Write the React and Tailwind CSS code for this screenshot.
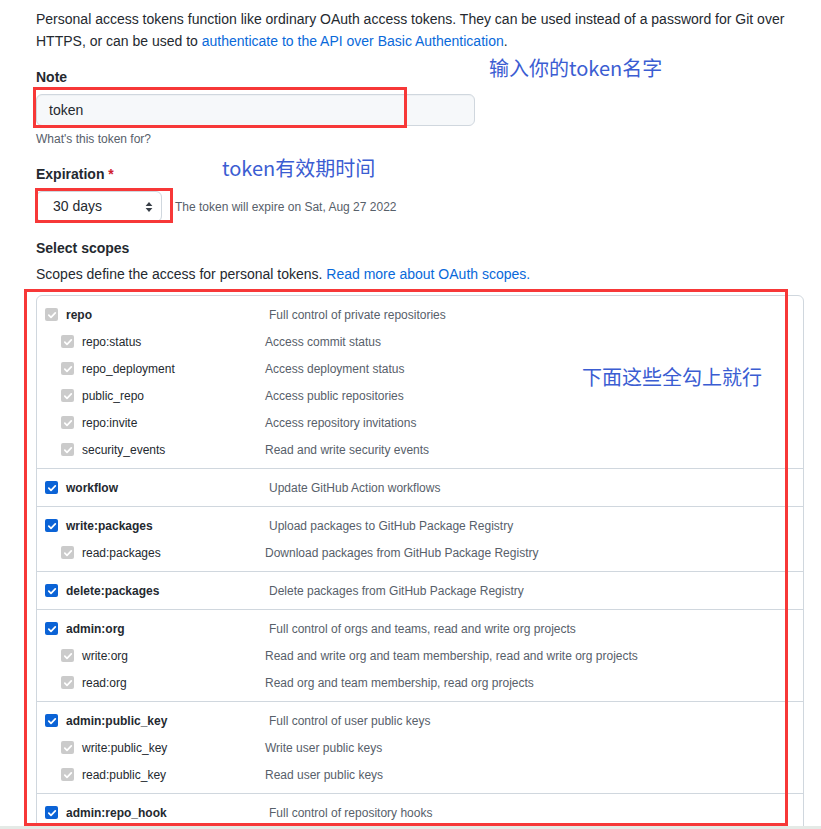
import React from 'react';

const scopes = [
  {
    name: 'repo',
    desc: 'Full control of private repositories',
    muted: true,
    subs: [
      ['repo:status', 'Access commit status'],
      ['repo_deployment', 'Access deployment status'],
      ['public_repo', 'Access public repositories'],
      ['repo:invite', 'Access repository invitations'],
      ['security_events', 'Read and write security events'],
    ],
  },
  { name: 'workflow', desc: 'Update GitHub Action workflows', subs: [] },
  {
    name: 'write:packages',
    desc: 'Upload packages to GitHub Package Registry',
    subs: [['read:packages', 'Download packages from GitHub Package Registry']],
  },
  { name: 'delete:packages', desc: 'Delete packages from GitHub Package Registry', subs: [] },
  {
    name: 'admin:org',
    desc: 'Full control of orgs and teams, read and write org projects',
    subs: [
      ['write:org', 'Read and write org and team membership, read and write org projects'],
      ['read:org', 'Read org and team membership, read org projects'],
    ],
  },
  {
    name: 'admin:public_key',
    desc: 'Full control of user public keys',
    subs: [
      ['write:public_key', 'Write user public keys'],
      ['read:public_key', 'Read user public keys'],
    ],
  },
  { name: 'admin:repo_hook', desc: 'Full control of repository hooks', subs: [] },
];

const Check = ({ muted }) => (
  <span
    className={`flex h-[13px] w-[13px] shrink-0 items-center justify-center rounded-[2px] ${
      muted ? 'bg-[#cbcbcb]' : 'bg-[#0b63d6]'
    }`}
  >
    <svg width="10" height="10" viewBox="0 0 10 10" fill="none">
      <path d="M1.8 5.2 4 7.4 8.3 2.8" stroke="white" strokeWidth="1.7" strokeLinecap="round" strokeLinejoin="round" />
    </svg>
  </span>
);

const ScopeRow = ({ label, desc, top, muted }) => (
  <div className={`flex h-[27px] items-center ${top ? 'pl-[8px]' : 'pl-[24px]'}`}>
    <Check muted={muted} />
    <span className={`ml-2 shrink-0 text-[12px] text-[#24292f] ${top ? 'w-[203px] font-semibold' : 'w-[183px]'}`}>
      {label}
    </span>
    <span className="whitespace-nowrap text-[12px] text-[#57606a]">{desc}</span>
  </div>
);

const App = () => {
  const cjk = { fontFamily: '"Noto Sans CJK SC", "Noto Sans", sans-serif' };

  return (
    <div className="relative w-[821px] bg-white" style={{ fontFamily: '"Liberation Sans", Arial, sans-serif' }}>
      <div className="h-[826px] overflow-hidden pl-[36px] pr-[17px] pt-2">
        <p className="whitespace-nowrap text-[14px] leading-[22px] text-[#24292f]">
          Personal access tokens function like ordinary OAuth access tokens. They can be used instead of a password for Git over
          <br />
          HTTPS, or can be used to{' '}
          <span className="text-[#0969da]">authenticate to the API over Basic Authentication</span>.
        </p>

        {/* Note */}
        <div className="mt-[15px] text-[14px] font-semibold leading-[21px] text-[#24292f]">Note</div>
        <div className="mt-[6px] flex h-[32px] w-[439px] items-center rounded-md border border-[#d0d7de] bg-[#f6f8fa] pl-3 text-[14px] text-[#24292f] shadow-[inset_0_1px_0_rgba(208,215,222,0.2)]">
          token
        </div>
        <div className="mt-1 text-[12px] leading-[18px] text-[#57606a]">What's this token for?</div>

        {/* Expiration */}
        <div className="mt-[16px] text-[14px] font-semibold leading-[21px] text-[#24292f]">
          Expiration <span className="text-[#cf222e]">*</span>
        </div>
        <div className="mt-[6px] flex items-center gap-[13px]">
          <div className="flex h-[31px] w-[126px] items-center justify-between rounded-md border border-[#d0d7de] bg-white pl-4 pr-[8px] text-[14px] text-[#24292f] shadow-[0_1px_0_rgba(27,31,36,0.04)]">
            <span>30 days</span>
            <svg width="8" height="12" viewBox="0 0 8 12" fill="#3a4048">
              <path d="M4 1 7.4 5H0.6z" />
              <path d="M4 11 0.6 7h6.8z" />
            </svg>
          </div>
          <span className="text-[12px] text-[#57606a]">The token will expire on Sat, Aug 27 2022</span>
        </div>

        {/* Scopes */}
        <div className="mt-[16px] text-[14px] font-semibold leading-[21px] text-[#24292f]">Select scopes</div>
        <p className="mt-[5px] text-[14px] leading-[21px] text-[#24292f]">
          Scopes define the access for personal tokens.{' '}
          <span className="text-[#0969da]">Read more about OAuth scopes.</span>
        </p>

        <div className="mt-[10px] w-[768px] rounded-t-md border border-[#d0d7de]">
          {scopes.map((g, i) => (
            <div key={g.name} className={`py-[5px] ${i > 0 ? 'border-t border-[#d0d7de]' : ''}`}>
              <ScopeRow label={g.name} desc={g.desc} top muted={g.muted} />
              {g.subs.map(([label, desc]) => (
                <ScopeRow key={label} label={label} desc={desc} muted />
              ))}
            </div>
          ))}
        </div>
      </div>
      <div className="h-[3px] bg-[#e4eae6]" />

      {/* annotations */}
      <div className="absolute left-[33px] top-[87px] h-[41px] w-[374px] border-[3px] border-[#f73838]" />
      <div className="absolute left-[35px] top-[188px] h-[35px] w-[138px] border-[3px] border-[#f73838]" />
      <div className="absolute left-[24px] top-[289px] h-[537px] w-[764px] border-[3px] border-[#f73838]" />

      <div className="absolute left-[489px] top-[55px] whitespace-nowrap text-[20px] leading-[26px] text-[#3b5dd2]" style={cjk}>
        输入你的token名字
      </div>
      <div className="absolute left-[222px] top-[155px] whitespace-nowrap text-[20px] leading-[26px] text-[#3b5dd2]" style={cjk}>
        token有效期时间
      </div>
      <div className="absolute left-[582px] top-[364px] whitespace-nowrap text-[20px] leading-[26px] text-[#3b5dd2]" style={cjk}>
        下面这些全勾上就行
      </div>
    </div>
  );
};

export default App;
